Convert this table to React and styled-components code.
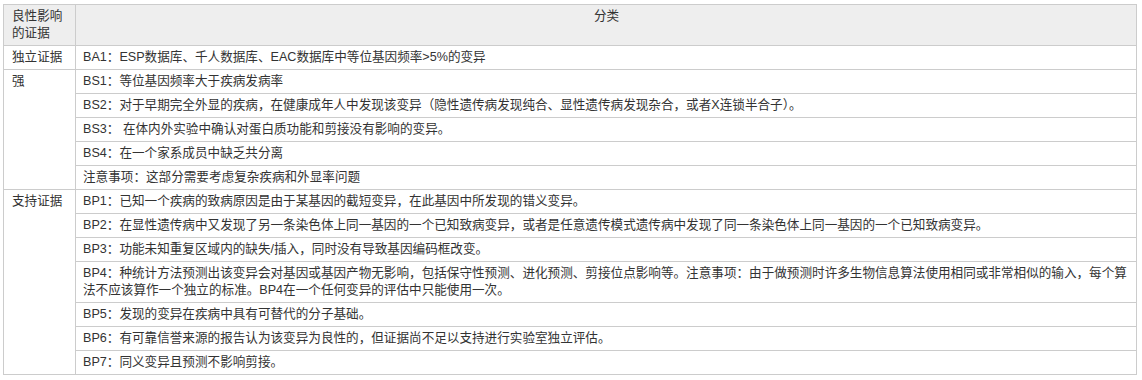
import React from 'react'
import styled, { createGlobalStyle } from 'styled-components'

const GlobalStyle = createGlobalStyle`
  body {
    margin: 0;
    background: #fff;
  }
`

const Page = styled.div`
  padding: 4px 5px 0 3px;
`

const Table = styled.table`
  width: 1134px;
  border-collapse: collapse;
  font-family: 'Liberation Sans', 'Noto Sans CJK SC', sans-serif;
  font-size: 12.6px;
  line-height: 17px;
  color: #333;
`

const HeadCell = styled.th`
  background: #eee;
  border: 1px solid #ccc;
  padding: 3px 7px 3px 8px;
  font-weight: normal;
  text-align: ${(props) => (props.center ? 'center' : 'left')};
  vertical-align: top;
  width: ${(props) => props.w || 'auto'};
`

const Cell = styled.td`
  border: 1px solid #ccc;
  padding: ${(props) => (props.label ? '3px 7px 3px 8px' : '3px 7px')};
  vertical-align: top;
  width: ${(props) => (props.label ? '56px' : 'auto')};
`

const groups = [
  {
    label: '独立证据',
    items: ['BA1：ESP数据库、千人数据库、EAC数据库中等位基因频率>5%的变异']
  },
  {
    label: '强',
    items: [
      'BS1：等位基因频率大于疾病发病率',
      'BS2：对于早期完全外显的疾病，在健康成年人中发现该变异（隐性遗传病发现纯合、显性遗传病发现杂合，或者X连锁半合子）。',
      'BS3： 在体内外实验中确认对蛋白质功能和剪接没有影响的变异。',
      'BS4：在一个家系成员中缺乏共分离',
      '注意事项：这部分需要考虑复杂疾病和外显率问题'
    ]
  },
  {
    label: '支持证据',
    items: [
      'BP1：已知一个疾病的致病原因是由于某基因的截短变异，在此基因中所发现的错义变异。',
      'BP2：在显性遗传病中又发现了另一条染色体上同一基因的一个已知致病变异，或者是任意遗传模式遗传病中发现了同一条染色体上同一基因的一个已知致病变异。',
      'BP3：功能未知重复区域内的缺失/插入，同时没有导致基因编码框改变。',
      'BP4：种统计方法预测出该变异会对基因或基因产物无影响，包括保守性预测、进化预测、剪接位点影响等。注意事项：由于做预测时许多生物信息算法使用相同或非常相似的输入，每个算法不应该算作一个独立的标准。BP4在一个任何变异的评估中只能使用一次。',
      'BP5：发现的变异在疾病中具有可替代的分子基础。',
      'BP6：有可靠信誉来源的报告认为该变异为良性的，但证据尚不足以支持进行实验室独立评估。',
      'BP7：同义变异且预测不影响剪接。'
    ]
  }
]

const App = () => {
  return (
    <Page>
      <GlobalStyle />
      <Table>
        <thead>
          <tr>
            <HeadCell w="56px">良性影响的证据</HeadCell>
            <HeadCell center>分类</HeadCell>
          </tr>
        </thead>
        <tbody>
          {groups.map((group) =>
            group.items.map((item, i) => (
              <tr key={item}>
                {i === 0 && (
                  <Cell label rowSpan={group.items.length}>
                    {group.label}
                  </Cell>
                )}
                <Cell>{item}</Cell>
              </tr>
            ))
          )}
        </tbody>
      </Table>
    </Page>
  )
}

export default App
